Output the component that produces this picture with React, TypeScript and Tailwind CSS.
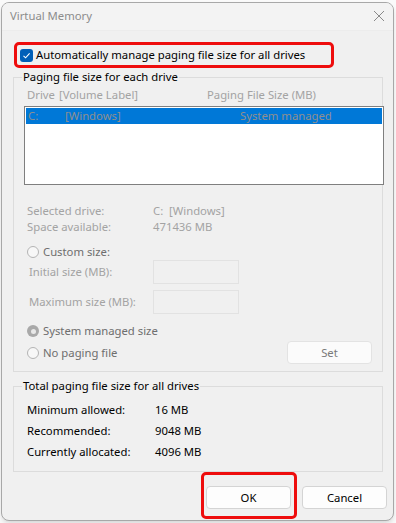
import React from "react";

const font = { fontFamily: '"Noto Sans", "Liberation Sans", sans-serif' };

function Radio({ checked, label }: { checked?: boolean; label: string }) {
  return (
    <div className="flex items-center h-[16px]">
      {checked ? (
        <span className="w-[12px] h-[12px] rounded-full bg-[#a9a9a9] flex items-center justify-center">
          <span className="w-[5px] h-[5px] rounded-full bg-[#e8e8e8]" />
        </span>
      ) : (
        <span className="w-[12px] h-[12px] rounded-full border border-[#b4b4b4] bg-[#f7f7f7]" />
      )}
      <span className="ml-[4px] text-[#6e6e6e]">{label}</span>
    </div>
  );
}

function Field({ label }: { label: string }) {
  return (
    <div className="flex items-center h-[24px]">
      <span className="w-[127px] pl-[3px] text-[#a3a3a3]">{label}</span>
      <div className="w-[86px] h-[24px] border border-[#e2e2e2] bg-[#f0f0f0]" />
    </div>
  );
}

export default function App() {
  return (
    <div
      className="w-[396px] h-[523px] bg-[#fafafa] overflow-hidden text-[11.3px] leading-[16px]"
      style={font}
    >
      <div className="ml-[1px] mt-[2px] w-[393px] h-[519px] rounded-[8px] border border-[#a8a8a8] bg-[#f0f0f0] shadow-md overflow-hidden">
        {/* Title bar */}
        <div className="h-[28px] flex items-center justify-between pl-[8px] pr-[6px] bg-[#f3f3f3] border-b border-[#ececec]">
          <span className="text-[#8c8c8c] mt-[-1px]">Virtual Memory</span>
          <svg width="12" height="12" viewBox="0 0 12 12" className="mr-[2px] mt-[-1px]">
            <path d="M1 1 L11 11 M11 1 L1 11" stroke="#8a8a8a" strokeWidth="1" />
          </svg>
        </div>

        <div className="pl-[11px] pr-[9px]">
          {/* highlighted checkbox */}
          <div className="mt-[11px] ml-[1px] w-[320px] h-[26px] border-[3px] border-[#ee0d0d] rounded-[5px] flex items-center pl-[3px]">
            <span className="w-[13px] h-[13px] rounded-[3px] bg-[#005fb8] flex items-center justify-center">
              <svg width="9" height="9" viewBox="0 0 9 9">
                <path d="M1.5 4.8 L3.6 6.8 L7.6 2.4" fill="none" stroke="#ffffff" strokeWidth="1.1" />
              </svg>
            </span>
            <span className="ml-[3px] text-black">Automatically manage paging file size for all drives</span>
          </div>

          {/* Paging file size for each drive */}
          <fieldset className="mt-[1px] w-[370px] min-w-0 border border-[#dcdcdc] px-[10px] pb-[7px]">
            <legend className="ml-[-2px] px-[1px] text-black">Paging file size for each drive</legend>
            <div className="mt-[2px] flex text-[#a3a3a3]">
              <span className="ml-[3px] w-[32px]">Drive</span>
              <span className="w-[148px]">[Volume Label]</span>
              <span>Paging File Size (MB)</span>
            </div>
            <div className="mt-[3px] w-[360px] h-[79px] border border-[#7f7f7f] bg-white p-[1px]">
              <div className="h-[16px] bg-[#0078d7] flex items-center text-[#8f8f8f]">
                <span className="ml-[2px] w-[37px]">C:</span>
                <span className="w-[175px]">[Windows]</span>
                <span>System managed</span>
              </div>
            </div>

            <div className="mt-[18px] ml-[3px] text-[#a3a3a3]">
              <div className="flex">
                <span className="w-[126px]">Selected drive:</span>
                <span>C:&nbsp; [Windows]</span>
              </div>
              <div className="flex">
                <span className="w-[126px]">Space available:</span>
                <span>471436 MB</span>
              </div>
            </div>

            <div className="mt-[9px] ml-[3px]">
              <Radio label="Custom size:" />
            </div>
            <div className="ml-[2px]">
              <Field label="Initial size (MB):" />
              <div className="mt-[6px]">
                <Field label="Maximum size (MB):" />
              </div>
            </div>
            <div className="mt-[9px] ml-[3px]">
              <Radio checked label="System managed size" />
            </div>
            <div className="mt-[2px] ml-[3px] flex items-center justify-between">
              <Radio label="No paging file" />
              <button className="w-[85px] h-[23px] rounded-[4px] border border-[#e3e3e3] bg-[#fbfbfb] text-[#7a7a7a]">
                Set
              </button>
            </div>
          </fieldset>

          {/* Total */}
          <fieldset className="mt-[6px] w-[370px] min-w-0 border border-[#dcdcdc] px-[10px] pt-[5px] pb-[9px]">
            <legend className="ml-[-2px] px-[1px] text-black">Total paging file size for all drives</legend>
            {[
              ["Minimum allowed:", "16 MB"],
              ["Recommended:", "9048 MB"],
              ["Currently allocated:", "4096 MB"],
            ].map(([k, v]) => (
              <div key={k} className="flex items-center h-[21px] ml-[3px] text-black">
                <span className="w-[128px]">{k}</span>
                <span>{v}</span>
              </div>
            ))}
          </fieldset>
        </div>

        {/* Buttons */}
        <div className="mt-[14px] flex justify-end gap-[11px] pr-[6px]">
          <div className="relative">
            <button className="w-[85px] h-[23px] rounded-[4px] border border-[#d4d4d4] bg-[#fdfdfd] text-black">OK</button>
            <span className="absolute left-[-5px] right-[-6px] top-[-14px] bottom-[-10px] border-[3px] border-[#ee0d0d] rounded-[5px]" />
          </div>
          <button className="w-[85px] h-[23px] rounded-[4px] border border-[#d4d4d4] bg-[#fdfdfd] text-black">Cancel</button>
        </div>
      </div>
    </div>
  );
}
